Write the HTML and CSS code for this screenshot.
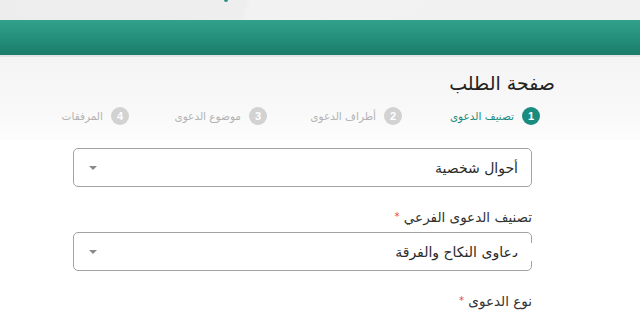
FILE: index.html
```html
<!DOCTYPE html>
<html lang="ar" dir="rtl">
<head>
<meta charset="utf-8">
<title>صفحة الطلب</title>
<link rel="stylesheet" href="styles.css">
</head>
<body>
<div class="topstrip"><span class="mark"></span></div>
<div class="greenbar"></div>
<header class="pagehead">
  <h1 class="title">صفحة الطلب</h1>
  <ol class="steps">
    <li class="step active"><span class="num">1</span><span class="lbl">تصنيف الدعوى</span></li>
    <li class="step"><span class="num">2</span><span class="lbl">أطراف الدعوى</span></li>
    <li class="step"><span class="num">3</span><span class="lbl">موضوع الدعوى</span></li>
    <li class="step"><span class="num">4</span><span class="lbl">المرفقات</span></li>
  </ol>
</header>
<main class="form">
  <div class="field">
    <div class="select"><span class="value">أحوال شخصية</span><span class="caret"></span></div>
  </div>
  <div class="field">
    <label class="label">تصنيف الدعوى الفرعي <span class="req">*</span></label>
    <div class="select"><span class="value">دعاوى النكاح والفرقة</span><span class="caret"></span></div>
    <span class="cover"></span>
    <span class="cover2"></span>
  </div>
  <div class="field">
    <label class="label">نوع الدعوى <span class="req">*</span></label>
  </div>
</main>
</body>
</html>
```
FILE: styles.css
```css
html, body {
  margin: 0;
  padding: 0;
  background: #ffffff;
  font-family: "DejaVu Sans", "Noto Sans", sans-serif;
  color: #2b2b2b;
  overflow: hidden;
}
.topstrip {
  height: 20px;
  background: linear-gradient(105deg, #ededed 0%, #eeeeee 38%, #f2f2f2 39%, #f1f1f1 100%);
  position: relative;
}
.mark {
  position: absolute;
  left: 224px;
  top: 0;
  width: 4px;
  height: 2px;
  background: #2a8f7d;
  border-radius: 0 0 2px 2px;
}
.greenbar {
  height: 35px;
  background: linear-gradient(to bottom, #31a18a 0%, #25907b 50%, #1a7b69 100%);
  border-bottom: 2px solid #e3e3e3;
}
.pagehead {
  background: linear-gradient(to bottom, #f4f4f4 0%, #f9f9f9 70%, #fdfdfd 100%);
  padding: 12px 85px 0 0;
  height: 71px;
}
.title {
  margin: 0;
  font-size: 19px;
  font-weight: normal;
  line-height: 28px;
  color: #222;
}
.steps {
  list-style: none;
  margin: 10px 15px 0 0;
  padding: 0;
  display: flex;
}
.step {
  flex: 0 0 auto;
  width: 138px;
  display: flex;
  align-items: center;
  gap: 8px;
  font-size: 10.5px;
  color: #b3b3b3;
}
.step:nth-child(2) { width: 135px; }
.step:nth-child(3) { width: 138px; }
.step:nth-child(4) { width: auto; }
.num {
  flex: 0 0 auto;
  width: 18px;
  height: 18px;
  border-radius: 50%;
  background: #d2d2d2;
  color: #fff;
  font-size: 11px;
  font-weight: bold;
  display: flex;
  align-items: center;
  justify-content: center;
  font-family: "Liberation Sans", sans-serif;
}
.step.active { color: #1f8a7c; }
.step.active .num { background: #1a8c7f; }
.form {
  width: 459px;
  margin: 8px 108px 0 0;
}
.field {
  margin-bottom: 20px;
  position: relative;
}
.label {
  display: block;
  font-size: 13.5px;
  line-height: 20px;
  margin-bottom: 5px;
  color: #333;
}
.req {
  color: #e8414a;
  font-size: 10px;
  vertical-align: top;
}
.select {
  height: 37px;
  border: 1px solid #a3a3a3;
  border-radius: 5px;
  display: flex;
  align-items: center;
  justify-content: space-between;
  padding: 0 13px 0 15px;
  background: #fff;
}
.value {
  font-size: 14px;
  color: #2a2a2a;
}
.caret {
  width: 0;
  height: 0;
  border-left: 4px solid transparent;
  border-right: 4px solid transparent;
  border-top: 4px solid #8a8a8a;
}
.cover {
  position: absolute;
  right: -13px;
  top: 36px;
  width: 33px;
  height: 10px;
  background: #fff;
}
.cover2 {
  position: absolute;
  right: -13px;
  top: 36px;
  width: 17px;
  height: 18px;
  background: #fff;
}
```
